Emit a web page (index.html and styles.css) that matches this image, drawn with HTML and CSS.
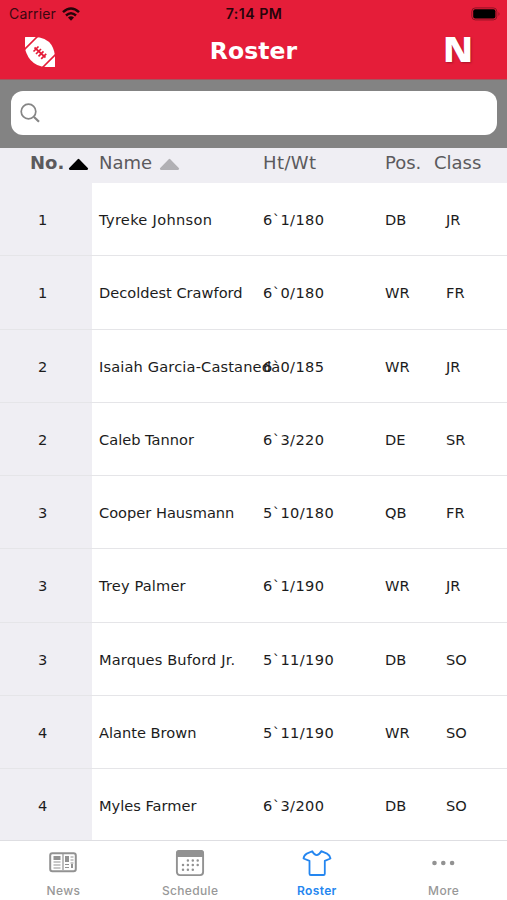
FILE: index.html
```html
<!DOCTYPE html>
<html lang="en">
<head>
<meta charset="utf-8">
<title>Roster</title>
<link rel="stylesheet" href="styles.css">
</head>
<body>
<div class="app">
  <header class="top">
    <div class="status">
      <div class="carrier"><span>Carrier</span>
        <svg width="18" height="14" viewBox="0 0 18 14" fill="none" stroke="#260409" stroke-width="2.5"><path d="M1 5.2Q9-2.2 17 5.2M4 8.5Q9 4 14 8.5"/><path d="M6 10.6Q9 8 12 10.6L9 13.7Z" fill="#260409" stroke="none"/></svg>
      </div>
      <span class="time">7:14 PM</span>
      <svg class="battery" width="30" height="14" viewBox="0 0 30 14"><rect x=".8" y=".9" width="25" height="12" rx="3.5" fill="none" stroke="#8f1225"/><rect x="2.2" y="2.3" width="22.2" height="9.2" rx="2" fill="#000"/><path d="M27.5 5v4q2-2 0-4Z" fill="#8f1225"/></svg>
    </div>
    <div class="nav">
      <svg class="ball" width="32" height="32" viewBox="0 0 32 32"><path fill="#fff" d="M1 1.500Q1 1 1.500 1H10Q22 1 27.500 9Q31 15 31 22V30.500Q31 31 30.500 31H22Q13 31 6.500 24Q1 17 1 10Z"/><g fill="none" stroke="#e51d39"><path stroke-width="1.600" d="M.5 13.500 13.500.5M18.500 31.500 31.500 18.500"/><path stroke-width="1.700" d="M10.500 11.500 21.500 21.500M9.500 15.500 14.500 10.500M12 18 17 13M14.500 20.300 19.500 15.300M17.200 22.800 22.200 17.800"/></g></svg>
      <h1>Roster</h1>
      <span class="logo">N</span>
    </div>
  </header>
  <div class="search"><div class="field"><svg width="21" height="21" viewBox="0 0 21 21" fill="none" stroke="#858585"><circle cx="8.500" cy="8.500" r="7.300" stroke-width="1.700"/><path d="M14 14 19 18.800" stroke-width="2.200"/></svg></div></div>
  <div class="row head">
    <span class="no">No.<svg width="21" height="13" viewBox="0 0 21 13"><path d="M2 10.800 10.500 2 19 10.800Z" fill="#000" stroke="#000" stroke-width="2.200" stroke-linejoin="round"/></svg></span>
    <span>Name<svg class="gray" width="21" height="13" viewBox="0 0 21 13"><path d="M2 10.800 10.500 2 19 10.800Z" fill="#b1b0b4" stroke="#b1b0b4" stroke-width="2.200" stroke-linejoin="round"/></svg></span>
    <span class="size">Ht/Wt</span><span>Pos.</span><span class="class">Class</span>
  </div>
  <main class="list">
    <div class="row"><span class="no">1</span><span class="wide">Tyreke Johnson</span><span class="size">6`1/180</span><span>DB</span><span>JR</span></div>
    <div class="row"><span class="no">1</span><span>Decoldest Crawford</span><span class="size">6`0/180</span><span>WR</span><span>FR</span></div>
    <div class="row"><span class="no">2</span><span class="loose">Isaiah Garcia-Castaneda</span><span class="size">6`0/185</span><span>WR</span><span>JR</span></div>
    <div class="row"><span class="no">2</span><span>Caleb Tannor</span><span class="size">6`3/220</span><span>DE</span><span>SR</span></div>
    <div class="row"><span class="no">3</span><span>Cooper Hausmann</span><span class="size">5`10/180</span><span>QB</span><span>FR</span></div>
    <div class="row"><span class="no">3</span><span class="loose">Trey Palmer</span><span class="size">6`1/190</span><span>WR</span><span>JR</span></div>
    <div class="row"><span class="no">3</span><span class="loose">Marques Buford Jr.</span><span class="size">5`11/190</span><span>DB</span><span>SO</span></div>
    <div class="row"><span class="no">4</span><span>Alante Brown</span><span class="size">5`11/190</span><span>WR</span><span>SO</span></div>
    <div class="row"><span class="no">4</span><span>Myles Farmer</span><span class="size">6`3/200</span><span>DB</span><span>SO</span></div>
  </main>
  <nav class="tabs">
    <div class="tab"><svg width="28" height="28" viewBox="0 0 28 28" fill="none" stroke="#929292"><rect x="1.200" y="4.200" width="25.600" height="18" rx="2.200" stroke-width="2"/><path d="M14 5v16" stroke-width="1.200"/><path d="M4.500 9h7M18 7v6" stroke-width="4"/><path d="M4.500 13h7M4.500 16h7M4.500 19h7M16 15.500h4M16 18.500h4M21.500 8h3M21.500 11h3M21.500 14h3" stroke-width="1.200"/><path d="M23 15v4" stroke-width="2"/></svg><span>News</span></div>
    <div class="tab"><svg width="30" height="28" viewBox="0 0 30 28"><rect x="1.900" y="1.900" width="26.200" height="24.200" rx="3" fill="none" stroke="#929292" stroke-width="1.900"/><path d="M1 8V4Q1 1 4 1H26Q29 1 29 4V8Z" fill="#929292"/><g fill="none" stroke="#929292" stroke-width="2.500" stroke-linecap="round" stroke-dasharray="0 4.900"><path d="M12.900 11.500H23"/><path d="M8 16H23"/><path d="M8 20.800H18"/></g></svg><span>Schedule</span></div>
    <div class="tab active"><svg width="30" height="28" viewBox="0 0 30 28" fill="none" stroke="#2486f0" stroke-width="1.800" stroke-linejoin="round"><path d="M10.200 2.200Q14.700 10 19.200 2.200L25 4.600Q27.800 6 28.500 9.500L22.800 11.800V24.700Q22.800 26 21.500 26H8.800Q7.500 26 7.500 24.700V11.800L1.500 9.500Q2 6 4.800 4.600Z"/></svg><span>Roster</span></div>
    <div class="tab"><svg width="28" height="28" viewBox="0 0 28 28" fill="#929292"><circle cx="4.500" cy="14" r="2.300"/><circle cx="13.300" cy="14" r="2.300"/><circle cx="22.100" cy="14" r="2.300"/></svg><span>More</span></div>
  </nav>
</div>
</body>
</html>
```
FILE: styles.css
```css
* { box-sizing: border-box; }
body { margin: 0; background: #fff; color: #1c1c1c; font-family: "DejaVu Sans", sans-serif; }
.app { width: 507px; height: 900px; display: flex; flex-direction: column; overflow: hidden; }
.top { height: 79px; flex: none; background: #e51d39; }
.status { height: 27px; display: grid; grid-template-columns: 1fr auto 1fr; align-items: center; padding: 0 6px 0 9px; font-family: Inter, sans-serif; font-size: 14px; color: #3b0710; }
.carrier { display: flex; align-items: center; gap: 6px; letter-spacing: .15px; }
.time { margin-left: -2px; font-weight: 600; font-size: 14.2px; color: #26040a; letter-spacing: .45px; }
.battery { justify-self: end; }
.nav { height: 50px; display: grid; grid-template-columns: 1fr auto 1fr; align-items: center; padding: 0 34px 0 24px; color: #fff; }
h1 { margin: 0 0 2px 10px; font-size: 23.5px; line-height: 28px; letter-spacing: .1px; }
.logo { justify-self: end; margin-bottom: 7px; font: 800 36px/40px "Open Sans", sans-serif; text-shadow: 1px 1px 2px #a91429; }
.search { height: 69px; flex: none; background: #838383; border-top: 1px solid #a45660; padding: 11px 10px 0 11px; }
.field { height: 44px; background: #fff; border-radius: 12px; padding: 12px 9px; display: flex; }
.row { display: grid; grid-template-columns: 99px 164px 122px 61px 1fr; height: 73.25px; align-items: center; padding-top: 1px; font-size: 14.6px; white-space: nowrap; border-bottom: 1px solid #e5e5e8; }
.row .no { padding-left: 38px; }
.wide { letter-spacing: .3px; }
.loose { letter-spacing: .15px; }
.size { letter-spacing: .4px; }
.row.head { height: 35px; flex: none; background: #efeef3; border: 0; padding-bottom: 7px; font-size: 18px; line-height: 28px; color: #5b5a5d; }
.row.head .no { padding-left: 30px; font-weight: 700; }
.row.head svg { margin-left: 4px; vertical-align: -2px; }
.row.head .gray { margin-left: 7px; }
.row.head .class { margin-left: -12px; }
.list { height: 657px; flex: none; overflow: hidden; background: linear-gradient(90deg, #efeef3 92px, #fff 92px); }
.tabs { height: 60px; flex: none; display: grid; grid-template-columns: repeat(4, 1fr); background: #fff; border-top: 1px solid #dedee2; }
.tab { display: flex; flex-direction: column; align-items: center; padding-top: 8px; gap: 6px; font: 500 12px/15px Inter, sans-serif; letter-spacing: .35px; color: #989898; }
.tab.active { color: #2486f0; font-weight: 600; }
```
